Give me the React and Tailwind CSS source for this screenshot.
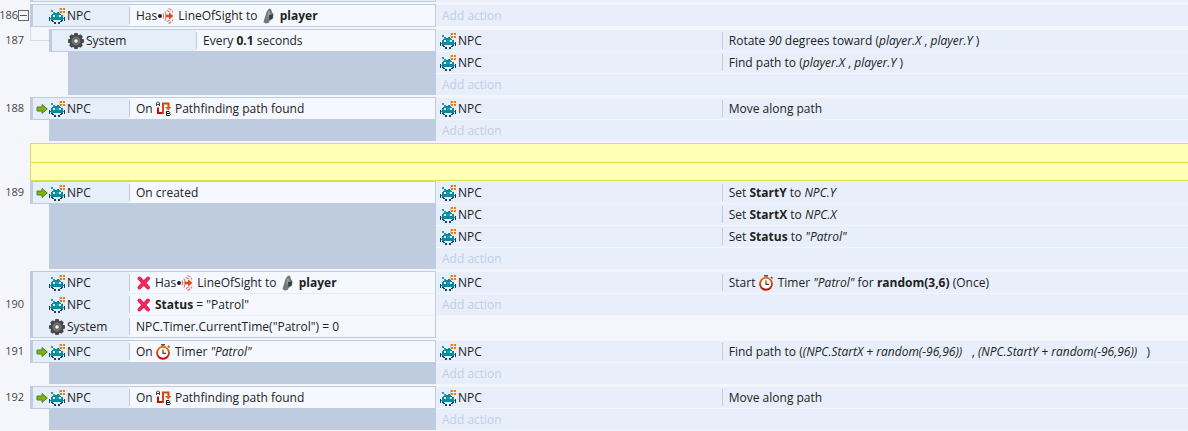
import React from 'react';

const NPC_ROWS = [
  '..........goo.oo',
  '..........goo.oo',
  '..cc......g.....',
  '..cc......goo.oo',
  '....cc..ttgoo.oo',
  '....ctttttt.....',
  '...ttttttttt....',
  '..tt..tccc..tt..',
  '..tt..tccc..tt..',
  'd.tttttttttttt.d',
  'dttttttttttttttd',
  'd.tttttttttttt.d',
  'd.dd........dd.d',
  '...dd......dd...',
  '.....dd..dd.....',
  '.....dd..dd.....',
];

const NPC_COLORS = {
  o: '#f47b0a',
  g: '#c9c9cf',
  c: '#14a5b4',
  t: '#0a8a9e',
  d: '#0b4468',
};

const NpcIcon = () => (
  <svg className="w-4 h-4 shrink-0" viewBox="0 0 16 16" shapeRendering="crispEdges">
    {NPC_ROWS.flatMap((row, y) =>
      row.split('').map((c, x) =>
        c === '.' ? null : <rect key={`${x}-${y}`} x={x} y={y} width="1" height="1" fill={NPC_COLORS[c]} />
      )
    )}
  </svg>
);

const GearIcon = () => (
  <svg className="w-4 h-4 shrink-0" viewBox="0 0 16 16">
    <g fill="#484848">
      {[0, 45, 90, 135].map(a => (
        <rect key={a} x="6" y="0" width="4" height="16" rx="1" transform={`rotate(${a} 8 8)`} />
      ))}
      <circle cx="8" cy="8" r="6.6" />
    </g>
    <circle cx="8" cy="8" r="4.4" fill="#777" />
    <circle cx="8" cy="8" r="2.3" fill="#f4f6fa" stroke="#3c3c3c" strokeWidth="0.8" />
  </svg>
);

const ArrowIcon = () => (
  <svg className="w-3 h-3 shrink-0" viewBox="0 0 12 12">
    <path d="M1 4h5V1.5L11.300 6l-5.300 4.500V8H1z" fill="#7db312" stroke="#4c8424" strokeWidth="1" strokeLinejoin="round" />
  </svg>
);

const CrossIcon = () => (
  <svg className="inline-block w-4 h-4 mt-px mr-[3px] align-top" viewBox="0 0 16 16">
    <path d="M3.500 3.500l8.500 9M12 3.500l-8.500 9" stroke="#cf2448" strokeWidth="4" strokeLinecap="round" />
    <path d="M3.500 3.500l8.500 9M12 3.500l-8.500 9" stroke="#f5265a" strokeWidth="2.800" strokeLinecap="round" />
  </svg>
);

const SightIcon = () => (
  <svg className="inline-block w-4 h-4 mt-px mx-px align-top" viewBox="0 0 16 16" fill="none">
    <circle cx="2" cy="8" r="2" fill="#222" />
    <path d="M5 5.500q1.500 2.500 0 5M7 3.500q3 4.500 0 9" stroke="#dd6a5c" />
    <path d="M7.500 6.800h3.500V4.500l4.500 3.500-4.500 3.500V9.200H7.500z" fill="#e04a10" />
    <path d="M9 2.500q2.500 1 3.500 3M9 13.500q2.500-1 3.500-3M10.500 .5q3 1 4.500 4M10.500 15.500q3-1 4.500-4" stroke="#dc7468" strokeWidth="1.100" strokeDasharray="3 .8" />
  </svg>
);

const PlayerIcon = () => (
  <svg className="inline-block w-4 h-4 mt-px align-top" viewBox="0 0 16 16">
    <path d="M8 .5l2 .5 1 3 1.500 2.500-.5 4-3 2-1.500 2.500-3 .5L2.500 14 4 9l1.500-5z" fill="#717a77" />
    <path d="M7 3.500l2 .5.5 3-3 3z" fill="#98a09c" />
    <path d="M8 7l4-.5-.5 4-3 1.500z" fill="#303c46" />
  </svg>
);

const PathIcon = () => (
  <svg className="inline-block w-4 h-4 mt-px align-top" viewBox="0 0 16 16" fill="none">
    <path d="M2 6.500V12h5.500" stroke="#c40d05" strokeWidth="2" />
    <path d="M7 13V2.500h5.500V7" stroke="#d8480c" strokeWidth="2" />
    <path d="M9 6h6.500l-3.200 3.500z" fill="#e0600d" />
    <path d="M.5 5V2l1-1h1l1 1v3M.5 3.500h3" stroke="#444" />
    <path d="M10.500 14.500v-4h2.500l.8 1-.8 1h-2.500h3l.8 1-.8 1z" stroke="#111" />
  </svg>
);

const TimerIcon = () => (
  <svg className="inline-block w-4 h-4 mt-px align-top" viewBox="0 0 16 16" fill="none">
    <defs>
      <linearGradient id="ring" x1="0" y1="0" x2="0" y2="1">
        <stop offset="0" stopColor="#e57a10" />
        <stop offset="1" stopColor="#bd0d08" />
      </linearGradient>
    </defs>
    <path d="M5 .8h4M7 1v2M12 2l1.500 1.500" stroke="#555" strokeWidth="1.500" />
    <circle cx="7" cy="8.800" r="6" fill="#fbfbfd" stroke="url(#ring)" strokeWidth="1.900" />
    <path d="M7 5.500V9.300h3" stroke="#444" strokeWidth="1.200" />
  </svg>
);

const ObjectName = ({ name }) => (
  <>
    {name === 'System' ? <GearIcon /> : <NpcIcon />}
    <span className="ml-0.5">{name}</span>
  </>
);

const Condition = ({ object = 'NPC', trigger, wide, children }) => (
  <div className="flex h-[21px] bg-[#f5f9ff]">
    <div className={wide ? 'flex items-center w-36 shrink-0 bg-[#e5eef9]' : 'flex items-center w-24 shrink-0 bg-[#e5eef9]'}>
      <span className="flex items-center w-4 pl-[3px] shrink-0">{trigger && <ArrowIcon />}</span>
      <ObjectName name={object} />
    </div>
    <div className="flex-1 my-0.5 pl-1.5 border-l border-[#bfcbdf] whitespace-pre leading-[17px]">{children}</div>
  </div>
);

const Action = ({ object = 'NPC', children }) => (
  <div className="flex h-[21px] bg-[#e8effb]">
    <div className="flex items-center w-[38%] pl-1 shrink-0">
      <ObjectName name={object} />
    </div>
    <div className="flex-1 my-0.5 pl-1.5 border-l border-[#bfcbdf] whitespace-pre leading-[17px]">{children}</div>
  </div>
);

const EventNumber = ({ number, expandable, rows }) => (
  <div className={rows > 1 ? 'flex items-center h-[67px] text-[11px]' : 'flex items-center h-[23px] text-[11px]'}>
    <span className={expandable ? 'text-[#444]' : 'text-[#444] pr-1.5'}>{number}</span>
    {expandable && (
      <button type="button" aria-label="Collapse event" className="flex items-center justify-center mr-px w-[11px] h-[11px] border border-[#666] shrink-0">
        <span className="w-[7px] h-px bg-[#555]" />
      </button>
    )}
  </div>
);

const Event = ({ number, nested, expandable, conditions, actions }) => (
  <section className="flex mb-0.5">
    <div className="flex items-center justify-end w-[30px] shrink-0 self-start">
      <EventNumber number={number} expandable={expandable} rows={conditions.length} />
    </div>
    <div className={nested ? 'flex w-[406px] shrink-0 pl-[19px]' : 'flex w-[406px] shrink-0'}>
      <div className="relative flex-1 flex flex-col">
        {nested && <span className="absolute right-full -top-0.5 w-[19px] h-3.5 border-l border-b border-[#d3dbec]" />}
        <div className="flex flex-col gap-px border border-l-3 border-[#bfcbdf] bg-[#e5eef9]">{conditions}</div>
        <div className="flex-1 ml-[19px] bg-[#bfcbdf]" />
      </div>
    </div>
    <div className="flex-1 flex flex-col gap-px pt-px">
      {actions}
      <button type="button" className="h-[21px] pl-1.5 text-left text-[#c3cee4] bg-[#e8effb]">Add action</button>
    </div>
  </section>
);

const App = () => (
  <main className="min-h-screen overflow-hidden bg-[#f5f6fb] text-xs text-[#222] font-['Open_Sans','Noto_Sans',sans-serif]">
    <div className="flex h-0.5 mb-0.5 pl-[30px]">
      <div className="w-[406px] shrink-0 bg-[#e5eef9] border-b border-l-3 border-r border-[#bfcbdf]" />
      <div className="flex-1 bg-[#e8effb]" />
    </div>

    <Event
      number="186"
      expandable
      conditions={<Condition>Has<SightIcon /> LineOfSight to <PlayerIcon /> <b>player</b></Condition>}
      actions={null}
    />
    <Event
      number="187"
      nested
      conditions={<Condition object="System" wide>Every <b>0.1</b> seconds</Condition>}
      actions={
        <>
          <Action>Rotate <i>90</i> degrees toward (<i>player.X</i> , <i>player.Y</i> )</Action>
          <Action>Find path to (<i>player.X</i> , <i>player.Y</i> )</Action>
        </>
      }
    />
    <Event
      number="188"
      conditions={<Condition trigger>On <PathIcon /> Pathfinding path found</Condition>}
      actions={<Action>Move along path</Action>}
    />

    <div className="ml-[30px] h-[38px] border-y border-l border-[#dede50] bg-[#ffffb5]">
      <div className="h-[19px] border-b border-[#dede50]" />
    </div>

    <Event
      number="189"
      conditions={<Condition trigger>On created</Condition>}
      actions={
        <>
          <Action>Set <b>StartY</b> to <i>NPC.Y</i></Action>
          <Action>Set <b>StartX</b> to <i>NPC.X</i></Action>
          <Action>Set <b>Status</b> to <i>"Patrol"</i></Action>
        </>
      }
    />
    <Event
      number="190"
      conditions={[
        <Condition key="sight"><CrossIcon />Has<SightIcon /> LineOfSight to <PlayerIcon /> <b>player</b></Condition>,
        <Condition key="status"><CrossIcon /><b>Status</b> = "Patrol"</Condition>,
        <Condition key="timer" object="System">NPC.Timer.CurrentTime("Patrol") = 0</Condition>,
      ]}
      actions={<Action>Start <TimerIcon /> Timer <i>"Patrol"</i> for <b>random(3,6)</b> (Once)</Action>}
    />
    <Event
      number="191"
      conditions={<Condition trigger>On <TimerIcon /> Timer <i>"Patrol"</i></Condition>}
      actions={<Action>Find path to (<i>(NPC.StartX + random(-96,96))</i>   , <i>(NPC.StartY + random(-96,96))</i>   )</Action>}
    />
    <Event
      number="192"
      conditions={<Condition trigger>On <PathIcon /> Pathfinding path found</Condition>}
      actions={<Action>Move along path</Action>}
    />
  </main>
);

export default App;
